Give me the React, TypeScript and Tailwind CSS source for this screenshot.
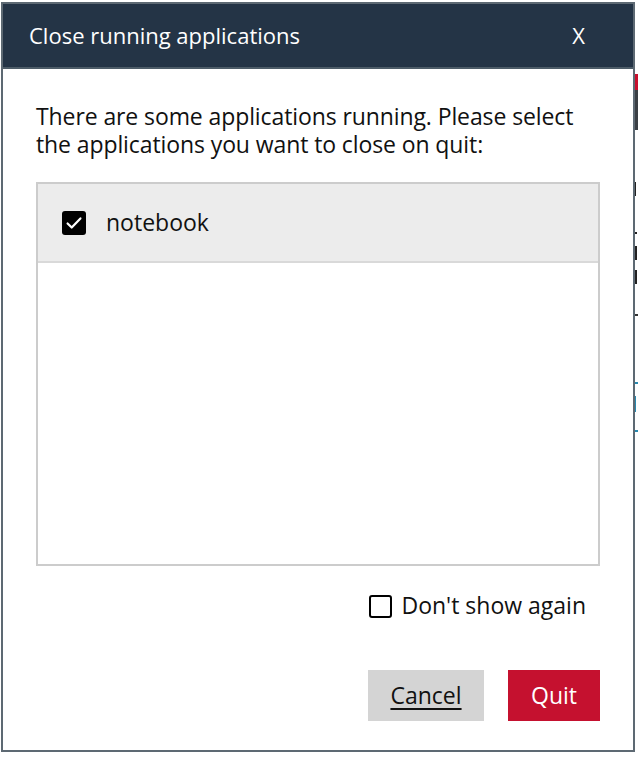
import React, { useState } from 'react';

const font = { fontFamily: '"Open Sans", "Noto Sans", "Liberation Sans", sans-serif' };

const CheckIcon = () => (
    <svg viewBox="0 0 24 24" className="w-[22px] h-[22px]" fill="none" stroke="white" strokeWidth={2.4} strokeLinecap="round" strokeLinejoin="round">
        <path d="M5 12.5l4.5 4.5L19 7" />
    </svg>
);

export default function App() {
    const [apps, setApps] = useState([{ name: 'notebook', checked: true }]);
    const [dontShow, setDontShow] = useState(false);

    const toggle = (name: string) =>
        setApps(apps.map((a) => (a.name === name ? { ...a, checked: !a.checked } : a)));

    return (
        <div className="relative w-[638px] h-[758px] bg-white overflow-hidden text-[#111]" style={font}>
            {/* page behind the dialog, only a sliver shows on the right */}
            <div className="absolute right-0 top-0 w-[4px] h-full flex flex-col">
                <div className="h-[74px]" />
                <div className="h-[16px] bg-[#c8102e]" />
                <div className="h-[40px] bg-[#3a3f44]" />
                <div className="h-[52px]" />
                <div className="h-[14px] w-[2px] bg-[#222]" />
                <div className="h-[36px]" />
                <div className="h-[2px] w-[3px] bg-[#222]" />
                <div className="h-[12px]" />
                <div className="h-[14px] w-[3px] bg-[#222]" />
                <div className="h-[10px]" />
                <div className="h-[14px] w-[3px] bg-[#222]" />
                <div className="h-[30px]" />
                <div className="h-[2px] bg-[#333]" />
                <div className="h-[66px]" />
                <div className="h-[2px] bg-[#2a8ab0]" />
                <div className="h-[12px]" />
                <div className="h-[16px] w-[2px] bg-[#2a8ab0]" />
                <div className="h-[18px]" />
                <div className="h-[2px] bg-[#2a8ab0]" />
            </div>

            {/* dialog */}
            <div className="absolute left-[1px] top-[2px] w-[634px] h-[750px] bg-white border-2 border-[#5d6973] flex flex-col">
                <header className="h-[65px] bg-[#243446] border-b-2 border-[#4d5c68] flex items-center justify-between pl-[26px] pr-[48px]">
                    <h1 className="text-white text-[22px] leading-none -mt-[2px]">Close running applications</h1>
                    <button className="text-white text-[22px] leading-none -mt-[2px]">X</button>
                </header>

                <div className="flex-1 flex flex-col px-[33px] pt-[33px]">
                    <p className="max-w-[545px] text-[23px] leading-[28px] tracking-[-0.1px]">
                        There are some applications running. Please select the applications you want to close on quit:
                    </p>

                    <div className="mt-[24px] h-[384px] border-2 border-[#cccccc] bg-white">
                        {apps.map((a) => (
                            <label
                                key={a.name}
                                className="h-[79px] bg-[#ececec] border-b-2 border-[#d9d9d9] flex items-center pl-[24px] gap-[20px] cursor-pointer"
                            >
                                <span
                                    onClick={() => toggle(a.name)}
                                    className={`w-[24px] h-[24px] rounded-[3px] flex items-center justify-center ${a.checked ? 'bg-black' : 'border-2 border-black bg-white'}`}
                                >
                                    {a.checked && <CheckIcon />}
                                </span>
                                <span className="text-[23px] leading-none">{a.name}</span>
                            </label>
                        ))}
                    </div>

                    <div className="mt-[29px] flex justify-end pr-[14px]">
                        <label className="flex items-center gap-[9px] cursor-pointer" onClick={() => setDontShow(!dontShow)}>
                            <span className={`w-[23px] h-[23px] rounded-[3px] border-2 border-black flex items-center justify-center ${dontShow ? 'bg-black' : 'bg-white'}`}>
                                {dontShow && <CheckIcon />}
                            </span>
                            <span className="text-[23px] leading-none -mt-[2px]">Don't show again</span>
                        </label>
                    </div>

                    <div className="mt-[52px] flex justify-end gap-[24px]">
                        <button className="w-[116px] h-[51px] bg-[#d4d4d4] text-[23px] underline underline-offset-[4px] decoration-[2px]">
                            Cancel
                        </button>
                        <button className="w-[92px] h-[51px] bg-[#c5112f] text-white text-[23px]">
                            Quit
                        </button>
                    </div>
                </div>
            </div>
        </div>
    );
}
